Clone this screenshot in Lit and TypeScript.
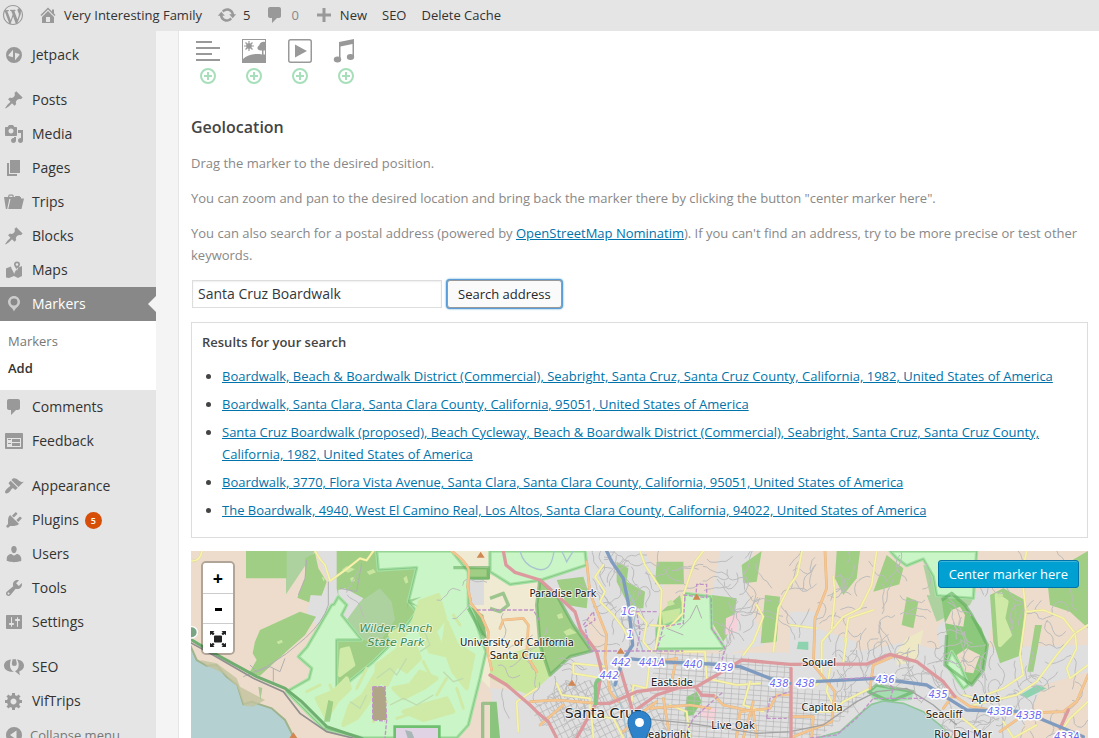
import { LitElement, html, svg, css, nothing } from "lit";
import { customElement, state } from "lit/decorators.js";

/* ---------- icon glyphs, 20 x 20 grid ---------- */
const ICONS: Record<string, string> = {
  wordpress:
    "M20 10c0-5.51-4.49-10-10-10C4.48 0 0 4.49 0 10c0 5.52 4.48 10 10 10 5.51 0 10-4.48 10-10zM7.78 15.37L4.37 6.22c.55-.02 1.17-.08 1.17-.08.5-.06.44-1.13-.06-1.11 0 0-1.45.11-2.37.11-.18 0-.37 0-.58-.01C4.12 2.69 6.87 1.11 10 1.11c2.33 0 4.45.87 6.05 2.34-.68-.11-1.65.39-1.65 1.58 0 .74.45 1.36.9 2.1.35.61.55 1.36.55 2.46 0 1.49-1.4 5-1.4 5l-3.03-8.37c.54-.02.82-.17.82-.17.5-.05.44-1.25-.06-1.22 0 0-1.44.12-2.38.12-.87 0-2.33-.12-2.33-.12-.5-.03-.56 1.2-.06 1.22l.92.08 1.26 3.41zM17.41 10c.24-.64.74-1.87.43-4.25.7 1.29 1.05 2.71 1.05 4.25 0 3.29-1.73 6.24-4.4 7.78.97-2.59 1.94-5.2 2.92-7.78zM6.1 18.09C3.12 16.65 1.11 13.53 1.11 10c0-1.3.23-2.48.72-3.59C3.25 10.3 4.67 14.2 6.1 18.09zm4.03-6.63l2.58 6.98c-.86.29-1.76.45-2.71.45-.79 0-1.57-.11-2.29-.33.81-2.38 1.62-4.74 2.42-7.1z",
  home: "M16 8.5l1.53 1.53-1.06 1.06L10 4.6l-6.47 6.49-1.06-1.06L10 2.5l4 4v-2h2v4zm-6-2.46l6 5.99V18H4v-5.97zM12 17v-5H8v5h4z",
  update:
    "M10.2 3.28c3.53 0 6.43 2.61 6.92 6h2.08l-3.5 4-3.5-4h2.32c-.45-1.97-2.21-3.45-4.32-3.45-1.45 0-2.73.71-3.54 1.78L4.95 5.66C6.23 4.2 8.11 3.28 10.2 3.28zm-.4 13.44c-3.52 0-6.43-2.61-6.92-6H.8l3.5-4c1.17 1.33 2.33 2.67 3.5 4H5.48c.45 1.97 2.21 3.45 4.32 3.45 1.45 0 2.73-.71 3.54-1.78l1.71 1.95c-1.28 1.46-3.15 2.38-5.25 2.38z",
  plus: "M17 8.5v3h-5.500V17h-3v-5.500H3v-3h5.500V3h3v5.500z",
  jetpack:
    "M10 2a8 8 0 1 0 0 16a8 8 0 1 0 0-16zM9 4.800v7.400l-3.600-.9c-.8-.2-1.100-.8-.7-1.500zM11 15.200V7.800l3.600.9c.8.2 1.100.8.7 1.500z",
  post: "M10.44 3.02l1.82-1.82 6.36 6.35-1.83 1.82c-1.05-.68-2.48-.57-3.41.36l-.75.75c-.92.93-1.04 2.35-.35 3.41l-1.83 1.82-2.41-2.41-2.8 2.79c-.42.42-3.38 2.71-3.8 2.29s1.86-3.39 2.28-3.81l2.79-2.79L4.1 9.36l1.83-1.82c1.05.69 2.48.57 3.4-.36l.75-.75c.93-.92 1.05-2.35.36-3.41z",
  media:
    "M13 11V4c0-.55-.45-1-1-1h-1.67L9 1H5L3.67 3H2c-.55 0-1 .45-1 1v7c0 .55.45 1 1 1h10c.55 0 1-.45 1-1zM7 4.5c1.38 0 2.5 1.12 2.5 2.5S8.38 9.5 7 9.5 4.5 8.38 4.5 7 5.62 4.5 7 4.5zM14 6h5v10.5c0 1.38-1.12 2.5-2.5 2.5S14 17.88 14 16.5s1.12-2.5 2.5-2.5c.17 0 .34.02.5.05V9h-3V6zm-4 8.05V13h2v3.5c0 1.38-1.12 2.5-2.5 2.5S7 17.88 7 16.5 8.12 14 9.5 14c.17 0 .34.02.5.05z",
  page: "M6 15V2h10v13H6zm-1 1h8v2H3V5h2v11z",
  trips:
    "M0 5h4l.4-1.600c.1-.5.5-.9 1-.9h3.200c.5 0 .9.4 1 .9L9.800 5h1.200l.3-.9h4.400l.3.9H17v1.500h3L17.500 17H4.300L6.500 7H5.300L3.200 17H1.900zM5.300 5h3.300l-.3-1.300H5.600z",
  map: "M3 8l4-1.500c-.1 2.500 2.600 4.500 3.200 7.500C10.900 11 12.800 9.500 13 8l1-.3L18 6v10l-4 2-4-2-5 2-3-.5V8.400zM13 1.500a3 3 0 0 1 3 3c0 2-2.200 3-3 6.500-.8-3.500-3-4.500-3-6.500a3 3 0 0 1 3-3zm0 1.700a1.300 1.300 0 1 0 0 2.600a1.300 1.300 0 1 0 0-2.600z",
  marker:
    "M10 2C6.690 2 4 4.690 4 8c0 2.020 1.170 3.710 2.530 4.890.43.370 1.180.960 1.850 1.830.74.970 1.410 2.010 1.620 2.710.21-.7.880-1.740 1.620-2.710.67-.870 1.420-1.460 1.850-1.830C14.830 11.710 16 10.020 16 8c0-3.310-2.690-6-6-6zm0 2.560a3.440 3.440 0 1 1 0 6.880a3.440 3.440 0 1 1 0-6.880z",
  comment:
    "M5 2h9c1.1 0 2 .9 2 2v7c0 1.1-.9 2-2 2h-2l-5 5v-5H5c-1.1 0-2-.9-2-2V4c0-1.1.9-2 2-2z",
  feedback:
    "M2 2h16c.55 0 1 .45 1 1v14c0 .55-.45 1-1 1H2c-.55 0-1-.45-1-1V3c0-.55.45-1 1-1zm15 14V7H3v9h14zM4 8v1h3V8H4zm4 0v3h8V8H8zm-4 4v1h3v-1H4zm4 0v3h8v-3H8z",
  appearance:
    "M14.48 11.06L7.41 3.99l1.5-1.5c.5-.56 2.3-.47 3.51.32 1.21.8 1.43 1.28 2.91 2.1 1.18.64 2.45 1.26 4.45.85zm-.71.71L6.7 4.7 4.93 6.47c-.39.39-.39 1.02 0 1.41l1.06 1.06c.39.39.39 1.03 0 1.42-.6.6-1.43 1.11-2.21 1.69-.35.26-.7.53-1.01.84C1.43 14.23.4 16.08 1.4 17.07c.99 1 2.84-.03 4.18-1.36.31-.31.58-.66.85-1.02.57-.78 1.08-1.61 1.69-2.21.39-.39 1.02-.39 1.41 0l1.06 1.06c.39.39 1.02.39 1.41 0z",
  plugins:
    "M13.11 4.36L9.87 7.6 8 5.73l3.24-3.24c.35-.34 1.05-.2 1.56.32.52.51.66 1.21.31 1.55zm-8 1.77l.91-1.12 9.01 9.01-1.19.84c-.71.71-2.63 1.16-3.82 1.16H6.14L4.9 17.26c-.59.59-1.54.59-2.12 0-.59-.58-.59-1.53 0-2.12l1.24-1.24v-3.88c0-1.13.4-3.19 1.09-3.89zm7.26 3.97l3.24-3.24c.34-.35 1.04-.21 1.55.31.52.51.66 1.21.31 1.55l-3.24 3.25z",
  users:
    "M10 9.250c-2.270 0-2.730-3.440-2.730-3.440C7 4.020 7.820 2 9.970 2c2.160 0 2.980 2.020 2.710 3.810 0 0-.410 3.440-2.680 3.440zm0 2.570L12.720 10c2.390 0 4.520 2.330 4.520 4.530v2.490s-3.650 1.130-7.240 1.130c-3.650 0-7.240-1.130-7.240-1.130v-2.490c0-2.250 1.940-4.480 4.470-4.480z",
  tools:
    "M16.68 9.77c-1.34 1.34-3.3 1.67-4.95.99l-5.41 6.52c-.99.99-2.59.99-3.58 0s-.99-2.59 0-3.57l6.52-5.42c-.68-1.65-.35-3.61.99-4.95 1.28-1.28 3.12-1.62 4.72-1.06l-2.89 2.89 2.82 2.82 2.86-2.87c.53 1.58.18 3.39-1.08 4.65zM3.81 16.21c.4.39 1.04.39 1.43 0 .4-.4.4-1.04 0-1.43-.39-.4-1.03-.4-1.43 0-.39.39-.39 1.03 0 1.43z",
  settings:
    "M18 16V4c0-.55-.45-1-1-1H3c-.55 0-1 .45-1 1v12c0 .55.45 1 1 1h14c.55 0 1-.45 1-1zM8 11h1c.55 0 1 .45 1 1s-.45 1-1 1H8v1.500c0 .28-.22.5-.5.5s-.5-.22-.5-.5V13H6c-.55 0-1-.45-1-1s.45-1 1-1h1V5.500c0-.28.22-.5.5-.5s.5.22.5.5V11zm5-2h-1c-.55 0-1-.45-1-1s.45-1 1-1h1V5.500c0-.28.22-.5.5-.5s.5.22.5.5V7h1c.55 0 1 .45 1 1s-.45 1-1 1h-1v5.500c0 .28-.22.5-.5.5s-.5-.22-.5-.5V9z",
  seo: "M7 2.500C2.500 2.800 0 5.500 0 8.800c0 3.500 3.500 6 8 6h2C7.500 13.500 6 11.500 6 8.500 6 6 6.300 4 7 2.500zM13 2.500c1 1.500 1.700 3 1.700 5.500 0 3-1.300 5-3.700 6.300l4.800 4-.6-3.800C18 13.500 20 11.500 20 8.800c0-3.300-2.500-6-7-6.300zM8.600 2.200h3.400l.8 4.300a2.500 2.500 0 0 1-5 0z",
  generic:
    "M18 12h-2.18c-.17.7-.44 1.35-.81 1.93l1.54 1.54-2.1 2.1-1.54-1.54c-.58.36-1.23.63-1.91.79V19H8v-2.18c-.68-.16-1.33-.43-1.91-.79l-1.54 1.54-2.12-2.12 1.54-1.54c-.36-.58-.63-1.23-.79-1.91H1V9.03h2.17c.16-.7.44-1.35.8-1.94L2.43 5.55l2.1-2.1 1.54 1.54c.58-.37 1.24-.64 1.93-.81V2h3v2.18c.68.16 1.33.43 1.91.79l1.54-1.54 2.12 2.12-1.54 1.54c.36.59.64 1.24.8 1.94H18V12zm-8.5 1.500c1.66 0 3-1.34 3-3s-1.34-3-3-3-3 1.34-3 3 1.34 3 3 3z",
  collapse: "M10 2a8 8 0 1 0 0 16a8 8 0 1 0 0-16zM12.500 5.500v9L6 10z",
};

const glyph = (name: string) =>
  html`<svg class="glyph" viewBox="0 0 20 20" aria-hidden="true">
    <path fill-rule="evenodd" d=${ICONS[name]}></path>
  </svg>`;

/* ---------- admin bar ---------- */
@customElement("admin-bar")
class AdminBar extends LitElement {
  static styles = css`
    :host { display: block; }
    .bar {
      box-sizing: border-box; display: flex; align-items: center; height: 31px; padding: 0 0 1px 3px;
      background: #e5e5e5; color: #333; font-size: 13px; line-height: 30px;
    }
    a { display: flex; align-items: center; gap: 6px; color: inherit; text-decoration: none; margin-right: 15px; }
    a.dim { color: #888; }
    .glyph { width: 20px; height: 20px; fill: #999; }
  `;
  render() {
    return html`<nav class="bar" aria-label="Toolbar">
      <a href="#" aria-label="About WordPress">${glyph("wordpress")}</a>
      <a href="#">${glyph("home")}Very Interesting Family</a>
      <a href="#">${glyph("update")}5</a>
      <a href="#" class="dim">${glyph("comment")}0</a>
      <a href="#">${glyph("plus")}New</a>
      <a href="#">SEO</a>
      <a href="#">Delete Cache</a>
    </nav>`;
  }
}

/* ---------- side menu ---------- */
interface MenuItem { icon: string; label: string; badge?: number; children?: string[] }
const MENU: MenuItem[][] = [
  [{ icon: "jetpack", label: "Jetpack" }],
  [
    { icon: "post", label: "Posts" },
    { icon: "media", label: "Media" },
    { icon: "page", label: "Pages" },
    { icon: "trips", label: "Trips" },
    { icon: "post", label: "Blocks" },
    { icon: "map", label: "Maps" },
    { icon: "marker", label: "Markers", children: ["Markers", "Add"] },
    { icon: "comment", label: "Comments" },
    { icon: "feedback", label: "Feedback" },
  ],
  [
    { icon: "appearance", label: "Appearance" },
    { icon: "plugins", label: "Plugins", badge: 5 },
    { icon: "users", label: "Users" },
    { icon: "tools", label: "Tools" },
    { icon: "settings", label: "Settings" },
  ],
  [
    { icon: "seo", label: "SEO" },
    { icon: "generic", label: "VifTrips" },
  ],
];

@customElement("admin-menu")
class AdminMenu extends LitElement {
  static styles = css`
    :host { display: block; }
    ul { list-style: none; margin: 0; padding: 0; }
    .group { margin-bottom: 11px; }
    .group:last-of-type { margin-bottom: 0; }
    .item {
      display: flex; align-items: center; gap: 8px; height: 34px; padding-left: 4px;
      color: #333; font-size: 14px; text-decoration: none; position: relative;
    }
    .glyph { width: 20px; height: 20px; fill: #999; flex: none; }
    .current { background: #888; color: #fff; }
    .current .glyph { fill: #ccc; }
    .current::after {
      content: ""; position: absolute; right: 0; top: 9px;
      border: 8px solid transparent; border-right-color: #f4f4f4; border-left-width: 0;
    }
    .sub { background: #fff; padding: 7px 0 8px; }
    .sub a { display: block; padding-left: 8px; font-size: 13px; line-height: 27px; color: #777; text-decoration: none; }
    .sub .here { color: #333; font-weight: 600; }
    .badge {
      background: #d64e07; color: #fff; font-size: 9px; font-weight: 600;
      min-width: 17px; line-height: 17px; border-radius: 9px; text-align: center; margin-left: -2px;
    }
    .collapse {
      display: flex; align-items: center; gap: 6px; height: 34px; padding: 0 0 0 4px;
      border: 0; background: none; font: inherit; font-size: 13px; color: #777;
    }
  `;
  render() {
    return html`<nav aria-label="Main menu">
      ${MENU.map(
        (g) => html`<ul class="group">
          ${g.map(
            (m) => html`<li>
              <a href="#" class="item ${m.children ? "current" : ""}">
                ${glyph(m.icon)}<span>${m.label}</span>
                ${m.badge ? html`<span class="badge">${m.badge}</span>` : nothing}
              </a>
              ${m.children
                ? html`<ul class="sub">
                    ${m.children.map((c) => html`<li><a href="#" class=${c === "Add" ? "here" : ""}>${c}</a></li>`)}
                  </ul>`
                : nothing}
            </li>`
          )}
        </ul>`
      )}
      <button class="collapse" type="button">${glyph("collapse")}Collapse menu</button>
    </nav>`;
  }
}

/* ---------- map ---------- */
type Area = [fill: string, points: string];

// Terrain coordinates are on a grid three times finer than the label grid.
const LAND: Area[] = [
  ["#aed1a0", "288,18 375,18 288,148"],
  ["#9fce84", "168,18 290,18 290,100 168,100"],
  ["#9fce84", "345,40 375,24 385,70 410,110 395,152 372,178 322,158 345,100"],
  ["#dfdfdf", "375,18 442,18 442,150 415,225 380,240 350,210 362,150 395,152 415,110"],
  ["#9fce84", "440,18 560,18 565,72 680,68 655,170 680,200 620,280 550,350 440,440 440,285 515,285 455,210 440,130"],
  ["#dfdfdf", "445,135 465,130 520,160 490,200 480,230 450,205 475,180 445,152"],
  ["#aed1a0", "510,170 570,130 605,170 615,225 570,290 515,285 470,225"],
  ["#9fce84", "195,290 210,255 330,200 378,215 345,270 300,310 210,392 176,386 200,345 188,325"],
  ["#f0ead2", "780,18 900,18 900,430 870,400 885,300 835,180"],
  ["#9fce84", "788,65 900,70 900,102 788,102"],
  ["#dcdcdc", "790,102 882,102 882,180 790,180"],
  ["#84bd78", "835,180 880,210 890,280 850,250"],
  ["#f0ead2", "900,90 1040,110 1060,300 900,400"],
  ["#dfdfdf", "1060,110 1190,60 1185,18 1380,18 1420,90 1410,330 2700,300 2700,579 1000,579 900,579 900,430 1020,440 1080,390 1150,330"],
  ["#eddccb", "1360,18 2700,18 2700,300 2400,300 2240,310 2060,300 1900,330 1600,310 1430,250 1420,110"],
  ["#dfdfdf", "1590,18 1690,18 1670,140 1720,300 1600,330 1560,180"],
  ["#dfdfdf", "1800,200 1890,200 1880,250 2000,290 2000,420 1800,430"],
  ["#dfdfdf", "2240,250 2280,200 2340,150 2400,120 2410,200 2390,330 2360,390 2260,370"],
  ["#dfdfdf", "2000,320 2150,290 2300,330 2520,380 2600,400 2560,520 2400,579 2000,579"],
  ["#eddccb", "2560,420 2694,380 2694,579 2480,579"],
  ["#eddccb", "860,420 905,440 905,579 800,579 835,540"],
  ["#eddccb", "1190,200 1240,230 1250,320 1200,300"],
  ["#cae79f", "900,340 1050,300 1085,390 1020,450 960,430 900,400"],
  ["#9fce84", "1050,105 1100,150 1150,240 1205,318 1140,335 1080,390 1050,300 1040,180"],
  ["#9fce84", "1100,105 1180,95 1195,140 1190,190 1130,180"],
  ["#9fce84", "1400,50 1480,50 1482,118 1395,118"],
  ["#9fce84", "1280,50 1315,70 1310,110 1365,140 1360,190 1320,190 1280,110"],
  ["#9fce84", "1470,150 1480,205 1440,245 1400,240 1408,205"],
  ["#cae79f", "1415,200 1470,190 1480,225 1420,240"],
  ["#9fce84", "1565,150 1640,160 1630,240 1600,290 1565,230"],
  ["#9fce84", "1655,60 1715,18 1700,110 1660,115"],
  ["#9fce84", "1725,150 1770,155 1760,290 1712,295"],
  ["#9fce84", "1940,18 2010,18 2000,100 1960,150 1935,100"],
  ["#9fce84", "2090,30 2140,70 2128,118 2050,140"],
  ["#9fce84", "2150,155 2185,170 2170,250 2135,240"],
  ["#aed1a0", "2200,60 2280,70 2300,160 2260,220 2220,150"],
  ["#9fce84", "2400,150 2440,130 2505,165 2495,330 2430,355 2410,290"],
  ["#9fce84", "2535,240 2556,240 2530,380 2512,380"],
  ["#9fce84", "2570,90 2694,18 2694,250 2640,200 2580,180"],
  ["#aed1a0", "2210,150 2350,160 2340,180 2240,230"],
  ["#8dc97c", "2255,165 2285,145 2325,180 2345,210 2375,250 2392,300 2380,375 2345,420 2320,400 2265,360 2270,270"],
  ["#eddccb", "2285,195 2310,185 2325,210 2320,245 2265,235"],
  ["#eddccb", "2300,330 2330,310 2370,330 2350,385 2320,380"],
  ["#eee9c4", "2120,320 2150,280 2200,255 2180,350 2120,360"],
  ["#8dc97c", "1490,455 1520,440 1535,470 1510,510 1482,515"],
  ["#8bc57d", "900,470 920,470 930,579 900,579"],
  ["#a5dcb0", "2035,440 2060,420 2170,440 2165,465 2100,470 2050,465"],
  ["#8ed3b0", "2490,450 2540,420 2570,430 2510,460"],
  ["#8ed3b0", "1825,290 1855,290 1855,315 1820,312"],
  ["#f6d3da", "1608,220 1650,200 1640,260 1606,270"],
  ["#f6d3da", "1540,480 1580,490 1575,530 1530,515"],
];

const PARKS = [
  "560,18 785,18 835,80 835,180 850,210 888,320 870,400 835,540 800,579 520,579 400,550 290,440 357,402 365,370 325,335 352,305 425,180 432,178 445,155 470,180 455,210 515,285 440,285 440,440 550,350 620,280 680,200 655,170 680,68 565,75",
  "900,18 1185,18 1190,60 1050,106 960,118 900,80",
  "1485,145 1562,155 1565,250 1605,310 1400,312 1400,250 1470,225",
  "2100,18 2360,18 2350,160 2240,152 2230,95 2200,42 2150,62 2120,40",
  "2285,320 2310,360 2335,420 2320,430 2270,360",
];

const SCRUB = [
  "560,360 600,330 640,300 670,290 690,340 650,380 620,360 590,420 560,400",
  "690,170 745,150 765,220 735,260 765,330 720,320 690,260 670,230",
  "380,460 430,440 470,400 480,430 440,470 410,520",
  "480,480 520,450 560,380 570,410 530,480 500,520 460,540",
  "610,430 660,420 690,380 740,400 700,430 640,460",
  "770,230 800,300 850,330 830,430 790,380 760,300",
  "640,500 700,480 770,460 790,500 700,525",
  "600,270 630,250 650,260 620,300",
  "2420,150 2450,170 2440,220 2460,270 2430,300",
  "455,315 475,310 490,360 450,390",
];

const road = (stroke: string, width: number, d: string, casing = "") =>
  svg`${casing ? svg`<path d=${d} fill="none" stroke=${casing} stroke-width=${width + 2} stroke-linejoin="round" stroke-linecap="round"></path>` : nothing}
  <path d=${d} fill="none" stroke=${stroke} stroke-width=${width} stroke-linejoin="round" stroke-linecap="round"></path>`;

const YELLOW = [
  "M375 18L392 45L405 60L420 108L470 72L510 40L530 46L550 18", "M3 48Q30 50 36 18",
  "M1350 18L1365 60L1415 135L1410 240L1395 320", "M1540 18L1515 50L1500 90L1480 150L1478 205L1440 245L1380 240",
  "M1240 60L1215 95L1245 140L1230 170L1270 210L1300 250L1310 270", "M1340 200L1370 235L1360 290L1385 320",
  "M1800 120L1785 150L1765 190L1750 320", "M1700 180L1720 215L1690 290L1660 330", "M1150 355L1250 365L1240 400L1150 385Z",
  "M1100 415L1115 450L1200 460L1210 579", "M1380 340L1370 430L1330 420L1325 470", "M1470 320L1545 320L1550 400L1640 420L1710 415",
  "M1300 579L1270 520L1200 510L1200 470", "M1500 579L1490 500L1440 480", "M1680 410L1660 480L1720 500", "M1040 430L980 470L985 560",
  "M1836 18L1822 90L1800 120", "M2060 18L2045 120L2010 190L1960 215L1930 250L1895 290L1895 400L1880 420",
  "M1965 290L1975 220L2050 195", "M1960 350L1970 280", "M1930 95L1935 150L1925 250", "M2510 18L2495 90L2508 200L2490 330L2500 390",
  "M2508 200L2560 195L2620 220L2655 265L2694 240", "M2655 265L2660 310L2630 370L2640 400L2694 360", "M2500 390L2440 430L2360 460L2320 450",
  "M2655 265L2600 330L2540 410L2480 450L2350 480", "M2040 430L1960 470L1930 500L1880 500", "M1920 370L1910 440L1940 500",
  "M2390 579L2330 530L2290 500", "M2440 530L2470 579L2540 540", "M1800 240L1880 250", "M2694 470L2640 520L2600 579",
];
const ORANGE = [
  "M785 18Q835 55 837 80L833 125L843 175L875 215L895 260L893 320L905 375", "M1190 50L1200 145L1250 270L1245 340L1260 440L1285 470",
  "M1905 18L1910 130L1875 220L1870 360L1935 440L1925 530L1800 579", "M1020 470L1100 465L1220 475", "M930 250L940 225L1000 220L1015 240L1010 330L1040 380",
  "M1440 430L1460 340L1410 350", "M1570 450L1600 480L1690 500L1700 579", "M1690 470L1660 579", "M1380 490L1500 480L1560 490",
  "M1420 460L1440 579", "M1120 480L1050 540", "M1300 560L1360 500L1400 470", "M1800 515L1870 515L1865 579", "M2040 430L2050 360L2120 330",
  "M2260 490L2290 450L2340 485L2500 510", "M2694 390L2660 470L2620 500L2480 505", "M2500 510L2430 560", "M1640 579L1650 500L1740 490L1760 450L1800 450",
];
const RED = [
  "M940 18L948 60L975 82L1050 105L1100 150L1155 200L1172 255L1220 320L1235 380L1218 475",
  "M900 390L950 420L1020 480L1040 500L1075 530L1100 579", "M1160 579L1218 475L1260 475L1340 440L1400 432L1520 425L1580 390L1655 345L1800 358L2030 357L2100 328L2180 350L2260 410L2295 455",
  "M1290 370L1320 470L1345 560", "M1520 430L1535 450L1570 452", "M1330 500L1400 450L1460 430", "M1803 370L1803 579", "M2635 495L2610 550",
];
const BLUE = [
  "M1250 18L1265 50L1300 100L1314 170L1322 240L1328 300L1300 345",
  "M1300 345L1290 370L1275 420", "M1310 340L1400 350L1560 357L1650 365L1740 400L1800 415",
  "M1870 410L2060 400L2210 420L2290 470L2330 495L2500 500L2620 550L2680 575",
];
const BOUNDARY = [
  "M900 195L1030 195L1050 230", "M1180 240L1210 200L1215 225L1185 245L1200 318L1480 318", "M1400 200L1340 200L1350 260L1340 318",
  "M1480 150L1550 158L1550 118L1520 118L1518 155", "M1564 160L1565 250L1605 310L1590 370", "M1730 520L1740 460L1800 440M1730 520L1790 520",
  "M2200 460L2050 460L2000 520L1940 570L1860 579", "M1960 402L2080 395L2110 430L2100 465",
  "M548 425L585 425L590 525L585 579M548 425L548 525L585 528", "M860 195L900 195", "M1400 320L1420 245L1480 235L1485 150", "M1480 579L1510 520L1600 440",
];

// Winding lanes on the hillsides, drawn from a fixed seed so that the map is the same on every load.
function lanes(x0: number, y0: number, x1: number, y1: number, count: number, seed: number): string {
  let s = seed;
  const next = () => ((s = (s * 1103515245 + 12345) % 2147483648) / 2147483648);
  let d = "";
  for (let i = 0; i < count; i++) {
    let x = x0 + next() * (x1 - x0);
    let y = y0 + next() * (y1 - y0);
    let a = next() * 6.28;
    d += `M${x.toFixed(0)} ${y.toFixed(0)}`;
    for (let k = 0; k < 7; k++) {
      a += (next() - 0.5) * 1.6;
      x += Math.cos(a) * 12;
      y += Math.sin(a) * 14;
      d += `L${x.toFixed(0)} ${y.toFixed(0)}`;
    }
  }
  return d;
}

const LANES = [
  lanes(1190, 40, 1370, 320, 34, 7), lanes(1380, 30, 1480, 240, 6, 19), lanes(1600, 30, 1710, 300, 26, 3),
  lanes(1740, 30, 1890, 310, 14, 11), lanes(1920, 30, 2230, 310, 24, 5), lanes(1910, 310, 2260, 420, 36, 23),
  lanes(2270, 150, 2400, 410, 18, 29), lanes(2430, 30, 2670, 420, 20, 31), lanes(2240, 420, 2540, 565, 40, 37),
  lanes(930, 250, 1060, 430, 8, 41), lanes(1100, 350, 1220, 560, 20, 43), lanes(810, 115, 865, 168, 3, 47),
  lanes(460, 135, 505, 190, 2, 53), lanes(2570, 450, 2670, 565, 6, 59),
].join("");

interface Label { x: number; y: number; text: string; kind: string }
const LABELS: Label[] = [
  { x: 372, y: 46, text: "Paradise Park", kind: "town" },
  { x: 326, y: 95, text: "University of California", kind: "town" },
  { x: 326, y: 108, text: "Santa Cruz", kind: "town" },
  { x: 205, y: 81, text: "Wilder Ranch", kind: "park" },
  { x: 205, y: 95, text: "State Park", kind: "park" },
  { x: 481, y: 135, text: "Eastside", kind: "area" },
  { x: 412, y: 167, text: "Santa Cruz", kind: "city" },
  { x: 475, y: 187, text: "Seabright", kind: "area" },
  { x: 542, y: 178, text: "Live Oak", kind: "area" },
  { x: 628, y: 115, text: "Soquel", kind: "area" },
  { x: 631, y: 160, text: "Capitola", kind: "area" },
  { x: 795, y: 151, text: "Aptos", kind: "area" },
  { x: 753, y: 167, text: "Seacliff", kind: "town" },
  { x: 772, y: 187, text: "Rio Del Mar", kind: "town" },
  { x: 437, y: 64, text: "1C", kind: "route" },
  { x: 439, y: 87, text: "1", kind: "route" },
  { x: 430, y: 115, text: "442", kind: "route" },
  { x: 418, y: 128, text: "442", kind: "route" },
  { x: 461, y: 115, text: "441A", kind: "route" },
  { x: 502, y: 117, text: "440", kind: "route" },
  { x: 533, y: 120, text: "439", kind: "route" },
  { x: 588, y: 136, text: "438", kind: "route" },
  { x: 614, y: 136, text: "438", kind: "route" },
  { x: 694, y: 132, text: "436", kind: "route" },
  { x: 747, y: 147, text: "435", kind: "route" },
  { x: 809, y: 164, text: "433B", kind: "route" },
  { x: 838, y: 168, text: "433B", kind: "route" },
  { x: 876, y: 189, text: "433A", kind: "route" },
];

@customElement("location-map")
class LocationMap extends LitElement {
  static styles = css`
    :host { display: block; }
    .map { position: relative; height: 400px; overflow: hidden; background: #eddccb; }
    .tiles { display: block; width: 100%; height: 100%; }
    text { font-family: "DejaVu Sans", sans-serif; text-anchor: middle; paint-order: stroke; stroke-linejoin: round; }
    .town, .area, .city { fill: #222; stroke: rgba(255, 255, 255, 0.7); stroke-width: 2px; font-size: 10px; }
    .city { font-size: 14px; }
    .park { fill: #3f8a4f; stroke: rgba(255, 255, 255, 0.6); stroke-width: 2px; font-size: 11px; font-style: italic; }
    .route { fill: #6c6cf0; stroke: #fff; stroke-width: 3px; font-size: 10px; font-style: italic; }
    .controls {
      position: absolute; left: 10px; top: 10px; display: flex; flex-direction: column;
      border: 2px solid rgba(0, 0, 0, 0.25); border-radius: 5px; background-clip: padding-box; overflow: hidden;
    }
    .controls button {
      width: 30px; height: 30px; padding: 0; border: 0; background: #fff; color: #000;
      font: bold 18px "Noto Sans", sans-serif; line-height: 28px; display: grid; place-items: center;
    }
    .controls button + button { border-top: 1px solid #ccc; }
    .controls svg { width: 16px; height: 16px; fill: #222; }
    .controls .sign { fill: #000; }
    .center {
      position: absolute; right: 9px; top: 9px; height: 28px; padding: 0 10px;
      border: 1px solid #0073aa; border-radius: 3px; background: #00a0d2; color: #fff;
      font: inherit; font-size: 13px; box-shadow: inset 0 1px 0 rgba(120, 200, 230, 0.5);
    }
  `;
  render() {
    return html`<div class="map">
      <svg class="tiles" viewBox="0 0 897 400" preserveAspectRatio="xMidYMin slice" role="img" aria-label="Map of Santa Cruz">
        <defs>
          <pattern id="grid" width="22" height="15" patternUnits="userSpaceOnUse" patternTransform="rotate(4)">
            <path d="M0 1H22M1 0V15" stroke="#b8b8b8" stroke-width="2.500"></path>
          </pattern>
          <pattern id="grid2" width="17" height="21" patternUnits="userSpaceOnUse" patternTransform="rotate(-27)">
            <path d="M0 1H17M1 0V21" stroke="#b5b5b5" stroke-width="2.500"></path>
          </pattern>
        </defs>
        <g transform="translate(-1 -6) scale(0.33333)">
          <rect width="2700" height="1240" fill="#eddccb"></rect>
          ${LAND.map(([f, p]) => svg`<polygon fill=${f} points=${p}></polygon>`)}
          <polygon fill="url(#grid)" points="1400,318 1600,325 1800,360 1800,579 1430,579 1380,440"></polygon>
          <polygon fill="url(#grid2)" points="1110,420 1230,400 1330,420 1400,480 1440,579 1110,579 1020,500"></polygon>
          <polygon fill="url(#grid)" points="1800,430 1960,440 2030,440 1960,520 1880,579 1800,579"></polygon>
          ${PARKS.map((p) => svg`<polygon fill="#caf5c6" stroke="#a5e0a3" stroke-width="10" stroke-linejoin="round" points=${p}></polygon>
            <polygon fill="none" stroke="#86c986" stroke-width="3" stroke-linejoin="round" points=${p}></polygon>`)}
          ${SCRUB.map((p) => svg`<polygon fill="#cfeaa6" stroke="#cfeaa6" stroke-width="12" stroke-linejoin="round" points=${p}></polygon>`)}
          <path fill="none" stroke="#cfeaa6" stroke-width="9" stroke-linecap="round" d="M440 470l-20-50M500 430l30-60M590 470l-40 60M640 350l20-50M700 350l30 60M800 430l20 60M620 520l60-20M740 450l30-50M660 250l20-40M350 440l40-20M790 210l20 30"></path>
          <path fill="none" stroke="#bfdcae" stroke-width="4" d="M560 400l40-30 20 20 30-50M700 250l20 50-30 20M480 470l30 20 20-40M760 380l30 30 30-10M600 480l40-20 40 20 50-30"></path>
          <path fill="none" stroke="#5aa757" stroke-width="10" stroke-linejoin="round" opacity="0.55" d="M1050 106L1040 180L1050 300L1080 390L1140 335L1205 318L1150 240L1100 150ZM900 160L940 145L955 180L930 200L900 190M2255 165L2285 145L2325 180L2345 210L2392 300L2380 375L2345 420L2265 360L2270 270M790 68H895V100H840M835 190L885 280M2035 440L2060 420L2170 440L2100 470ZM878 579V475H900"></path>
          <path fill="#c9e6a0" d="M455 75l15-12 25 10-20 10zM480 100l10-5 5 12-10 5zM530 80l20-8 8 10-20 8zM395 95l10 5-4 10zM640 100l10-8 5 20-8 4zM260 290l15-6 4 8-14 6zM2420 150l15-10 5 12-15 8zM1430 170l15-6 10 14-20 6zM1120 260l20-10 20 14-30 8zM1100 210l15-6 5 14-14 4z"></path>
          <path fill="none" stroke="#a9c4cf" stroke-width="4" d="M990 18Q1000 60 1040 72T1090 30T1130 50L1150 18M1310 130L1340 190L1330 240L1360 320M1220 330L1260 400L1300 500L1310 579"></path>
          <path fill="none" stroke="#bcbcbc" stroke-width="3" stroke-linejoin="round" d=${LANES}></path>
          <path fill="none" stroke="#b0b0b0" stroke-width="3" d="M415 110V180Q400 230 345 280T230 365L160 395M180 360L200 380L240 365L270 380L285 340M250 370V410M350 45L345 100L325 150M515 55L500 140L450 130M1520 180L1500 220L1470 250M1520 180L1535 220M1430 250L1480 270"></path>

          <path fill="#b5d0d0" stroke="#9fb48d" stroke-width="6" d="M0 300L20 345L50 362L80 360L110 395L142 420L160 478L185 470L245 490L285 525L318 590V1240H0Z"></path>
          <path fill="#c2c39e" opacity="0.8" d="M30 345L80 355L140 400L150 425L225 465L190 485L162 482L142 425L100 385L50 362Z"></path>
          <path fill="#b5d0d0" stroke="#8fc79b" stroke-width="5" d="M1860 585L1950 560L2000 515L2045 478L2080 468L2140 475L2200 500L2250 540L2290 585V1240H1300V700Z"></path>
          <path fill="none" stroke="#6fae70" stroke-width="9" d="M0 282L60 318L200 395L285 430L335 470L410 545L520 582"></path>
          <path fill="none" stroke="#8f8f8f" stroke-width="5" d="M0 292L60 325L190 400L280 440L330 505L410 560L500 582"></path>
          <path fill="#b0a587" d="M548 425H585L590 525H548Z"></path>
          <path fill="#e0d3e3" stroke="#6fbf70" stroke-width="8" d="M614 545H748V600H614Z"></path>
          <path fill="#a9b6b6" d="M645 555l20 5 10 25h-20z"></path>
          <path fill="#7dbb6f" opacity="0.6" d="M415 465l15 5-10 60h-18zM655 165l40-10-30 15 20 15-30-10-5 20zM205 425l12 4-6 36z"></path>
          <circle cx="5" cy="262" r="17" fill="#7aa585" stroke="#fff" stroke-width="4"></circle>

          ${YELLOW.map((d) => road("#f7f4a6", 5, d, "#dcd6a4"))}
          ${ORANGE.map((d) => road("#f6c690", 6, d, "#e0b27f"))}
          <path fill="none" stroke="#a2a2a2" stroke-width="4" d="M1350 520L1500 535L1700 565L1800 560L1900 540L2000 470L2060 440L2150 430L2230 480L2300 540"></path>
          ${RED.map((d) => road("#dc9a9e", 10, d))}
          ${BLUE.map((d) => road("#809bc0", 10, d))}
          <path fill="none" stroke="#84c483" stroke-width="11" d="M1217 480V420Q1218 405 1235 400"></path>
          ${BOUNDARY.map((d) => svg`<path d=${d} fill="none" stroke="#c193c8" stroke-width="4" stroke-dasharray="12 5"></path>`)}
          <path fill="#d08752" d="M1292 308l12 18h-24zM1520 146l12 18h-24zM1146 404l12 18h-24zM310 562l14 20h-28zM872 20l12 18h-24z"></path>
        </g>
        ${LABELS.map((l) => svg`<text class=${l.kind} x=${l.x} y=${l.y}>${l.text}</text>`)}
        <g transform="translate(436 159)">
          <path fill="#2e83cb" stroke="#1f6ba8" d="M12.500 1C6 1 1 6 1 12.500 1 21 12.500 40 12.500 40S24 21 24 12.500C24 6 19 1 12.500 1z"></path>
          <circle cx="12.500" cy="12.500" r="4.500" fill="#fff"></circle>
        </g>
      </svg>
      <div class="controls">
        <button type="button" aria-label="Zoom in">+</button>
        <button type="button" aria-label="Zoom out">
          <svg class="sign" viewBox="0 0 16 16"><rect x="5" y="7" width="7" height="3"></rect></svg>
        </button>
        <button type="button" aria-label="Full screen">
          <svg viewBox="0 0 16 16"><rect x="4" y="4.500" width="8" height="7" rx="1"></rect>
            <path d="M0 0h4.500L3.200 1.300 4.600 2.700 3 4.200 1.500 2.900 0 4.300zM16 0v4.300l-1.500-1.400-1.500 1.300-1.600-1.500 1.400-1.400L11.500 0zM0 16v-4.300l1.500 1.400L3 11.800l1.600 1.500-1.400 1.400L4.500 16zM16 16h-4.500l1.300-1.300-1.400-1.400 1.600-1.500 1.500 1.300 1.500-1.400z"></path></svg>
        </button>
      </div>
      <button class="center" type="button">Center marker here</button>
    </div>`;
  }
}

/* ---------- block insert buttons ---------- */
const BLOCKS = [
  { label: "Add text", art: svg`<path fill="none" stroke="#999" stroke-width="2" d="M0 3h16M0 9h24M0 15h16M0 21h24"></path>` },
  {
    label: "Add image",
    art: svg`<path fill="#999" fill-rule="evenodd" d="M0 0H24V24H0ZM1 1V20C5 16 12 14 20 15.500V11.500C17 12 15 10.500 15.500 8.500C16 7 17 7 17.500 5.500C18 3.500 21 2 23 3V1ZM21.500 11.500V15.500H23V11.500Z"></path>
      <circle cx="7" cy="7" r="2.800" fill="#999"></circle><path stroke="#999" stroke-width="1.200" d="M7 2v10M2 7h10M3.500 3.500l7 7M10.500 3.500l-7 7"></path>`,
  },
  { label: "Add video", art: svg`<rect x="0.750" y="0.750" width="22.500" height="22.500" rx="2" fill="none" stroke="#999" stroke-width="1.500"></rect><path fill="#999" d="M7 5.500L19 12 7 18.500z"></path>` },
  { label: "Add audio", art: svg`<g fill="#999"><path d="M5 3L20 0V18H18.500V5L6.500 7.500V20H5Z"></path><ellipse cx="3.500" cy="20.500" rx="3.700" ry="3"></ellipse><ellipse cx="16.500" cy="18" rx="3.700" ry="3"></ellipse></g>` },
];

const RESULTS = [
  "Boardwalk, Beach & Boardwalk District (Commercial), Seabright, Santa Cruz, Santa Cruz County, California, 1982, United States of America",
  "Boardwalk, Santa Clara, Santa Clara County, California, 95051, United States of America",
  "Santa Cruz Boardwalk (proposed), Beach Cycleway, Beach & Boardwalk District (Commercial), Seabright, Santa Cruz, Santa Cruz County, California, 1982, United States of America",
  "Boardwalk, 3770, Flora Vista Avenue, Santa Clara, Santa Clara County, California, 95051, United States of America",
  "The Boardwalk, 4940, West El Camino Real, Los Altos, Santa Clara County, California, 94022, United States of America",
];

@customElement("app-root")
class AppRoot extends LitElement {
  @state() private address = "Santa Cruz Boardwalk";

  static styles = css`
    :host {
      display: flex; flex-direction: column; height: 100vh; overflow: hidden;
      font-family: "Open Sans", sans-serif; font-size: 13px; line-height: 22px; color: #444; background: #f4f4f4;
    }
    .body { flex: 1; min-height: 0; display: flex; overflow: hidden; }
    .side { flex: none; width: 156px; padding-top: 7px; background: #e5e5e5; }
    .panel {
      flex: 1; min-width: 0; margin-left: 22px; padding: 8px 11px 0 12px; background: #fff;
      border-left: 1px solid #e5e5e5;
    }
    .blocks { display: flex; gap: 12px; margin-bottom: 32px; }
    .block {
      display: flex; flex-direction: column; align-items: center; gap: 5px; width: 34px;
      padding: 0; border: 0; background: none;
    }
    .art { width: 24px; height: 24px; overflow: visible; }
    .add { width: 16px; height: 16px; }
    h3 { margin: 0 0 14px; font-size: 16px; font-weight: 600; line-height: 22px; color: #444; }
    p { margin: 0 0 13px; color: #888; }
    a { color: #0073aa; }
    .search { display: flex; align-items: center; gap: 5px; margin: 14px 0; padding-left: 1px; }
    .field {
      box-sizing: border-box; width: 250px; height: 28px; padding: 2px 5px 4px; border: 1px solid #ddd;
      font: inherit; font-size: 14px; color: #32373c; background: #fff; outline: 0;
      box-shadow: inset 0 1px 2px rgba(0, 0, 0, 0.07);
    }
    .go {
      height: 28px; padding: 0 10px; border: 1px solid #999; border-radius: 3px; background: #fafafa;
      color: #23282d; font: inherit; box-shadow: 0 0 0 1px #5b9dd9, 0 0 2px 1px rgba(30, 140, 190, 0.8);
    }
    .results { padding: 8px 10px; border: 1px solid #ddd; margin-bottom: 13px; }
    h4 { margin: 0 0 12px; font-size: 13px; font-weight: 600; line-height: 22px; }
    ul { margin: 0 0 8px; padding: 0 0 0 20px; }
    li + li { margin-top: 6px; }
  `;

  private onInput(e: Event) {
    this.address = (e.target as HTMLInputElement).value;
  }

  render() {
    return html`
      <admin-bar></admin-bar>
      <div class="body">
        <admin-menu class="side"></admin-menu>
        <main class="panel">
          <div class="blocks">
            ${BLOCKS.map(
              (b) => html`<button class="block" type="button" aria-label=${b.label}>
                <svg class="art" viewBox="0 0 24 24">${b.art}</svg>
                <svg class="add" viewBox="0 0 16 16">
                  <circle cx="8" cy="8" r="7" fill="none" stroke="#a6dfb9" stroke-width="2"></circle>
                  <path stroke="#a6dfb9" stroke-width="2" d="M8 4v8M4 8h8"></path>
                </svg>
              </button>`
            )}
          </div>
          <h3>Geolocation</h3>
          <p>Drag the marker to the desired position.</p>
          <p>You can zoom and pan to the desired location and bring back the marker there by clicking the button "center marker here".</p>
          <p>You can also search for a postal address (powered by <a href="#">OpenStreetMap Nominatim</a>). If you can't find an address, try to be more precise or test other keywords.</p>
          <form class="search" @submit=${(e: Event) => e.preventDefault()}>
            <input class="field" type="text" aria-label="Postal address" .value=${this.address} @input=${this.onInput} />
            <button class="go" type="submit">Search address</button>
          </form>
          <section class="results">
            <h4>Results for your search</h4>
            <ul>${RESULTS.map((r) => html`<li><a href="#">${r}</a></li>`)}</ul>
          </section>
          <location-map></location-map>
        </main>
      </div>
    `;
  }
}
